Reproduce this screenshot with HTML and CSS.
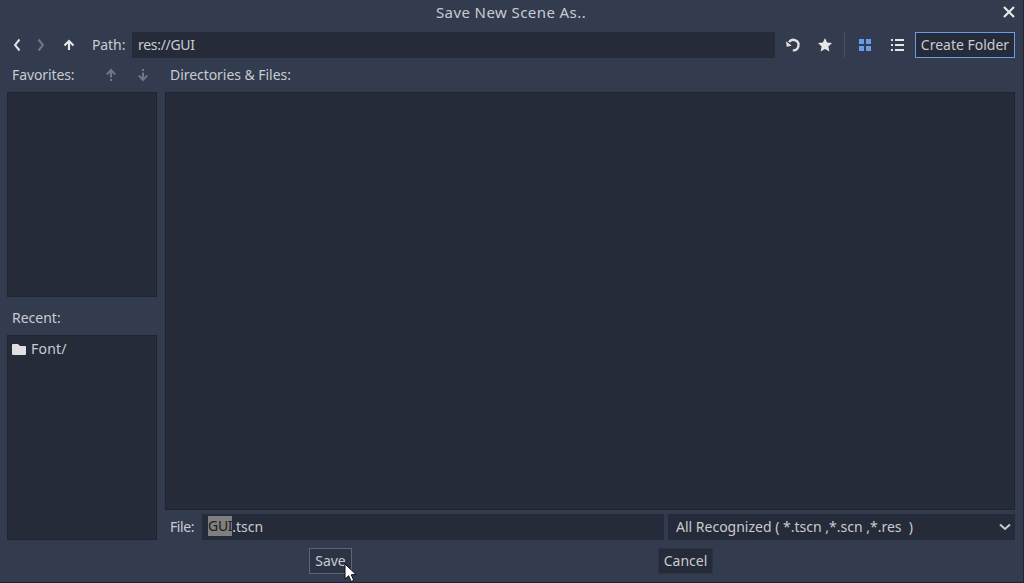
FILE: index.html
```html
<!DOCTYPE html>
<html lang="en">
<head>
<meta charset="utf-8">
<title>Save New Scene As..</title>
<link rel="stylesheet" href="styles.css">
</head>
<body>
<div class="dialog">
  <header class="titlebar">
    <span class="title">Save New Scene As..</span>
    <svg class="close" width="12" height="12" viewBox="0 0 12 12"><path d="M1 1L11 11M11 1L1 11" stroke="#e6e6e6" stroke-width="2.2" fill="none"/></svg>
  </header>
  <div class="toolbar">
    <button class="icon"><svg width="8" height="14" viewBox="0 0 8 14"><path d="M6.500 1.500L2 7L6.500 12.500" stroke="#e0e0e0" stroke-width="2" fill="none"/></svg></button>
    <button class="icon gap-s"><svg width="8" height="14" viewBox="0 0 8 14"><path d="M1.500 1.500L6 7L1.500 12.500" stroke="#6f7686" stroke-width="2" fill="none"/></svg></button>
    <button class="icon gap-m"><svg width="12" height="12" viewBox="0 0 12 12"><path d="M6 11V3M1.500 6.500L6 2L10.500 6.500" stroke="#e6e6e6" stroke-width="2.200" fill="none"/></svg></button>
    <span class="label path-label">Path:</span>
    <div class="field path-field">res://GUI</div>
    <button class="icon gap-reload"><svg width="16" height="16" viewBox="0 0 16 16"><path d="M4 5.200A5.200 5.200 0 1 1 7.800 13.300" stroke="#e0e0e0" stroke-width="2.400" fill="none"/><path d="M1 4.200L6.700 8.700L1.700 9.800Z" fill="#e0e0e0"/></svg></button>
    <button class="icon gap-l"><svg width="16" height="16" viewBox="0 0 16 16"><path d="M8 1L10.100 5.500L15 6.100L11.400 9.500L12.400 14.500L8 12L3.600 14.500L4.600 9.500L1 6.100L5.900 5.500Z" fill="#e6e6e6"/></svg></button>
    <span class="separator"></span>
    <button class="icon gap-sep"><svg width="12" height="12" viewBox="0 0 12 12"><path d="M0 0h5v5H0zM7 0h5v5H7zM0 7h5v5H0zM7 7h5v5H7z" fill="#699ce8"/></svg></button>
    <button class="icon gap-l"><svg width="13" height="12" viewBox="0 0 13 12"><path d="M0 0h2v2H0zM4 0h9v2H4zM0 5h2v2H0zM4 5h9v2H4zM0 10h2v2H0zM4 10h9v2H4z" fill="#e6e6e6"/></svg></button>
    <button class="btn create-folder">Create Folder</button>
  </div>
  <div class="columns">
    <aside class="sidebar">
      <div class="side-head">
        <span class="label fav-label">Favorites:</span>
        <button class="icon small"><svg width="12" height="14" viewBox="0 0 12 14"><path d="M6 13V11M6 9.500V3M1.800 6.500L6 2L10.200 6.500" stroke="#6f7686" stroke-width="2" fill="none"/></svg></button>
        <button class="icon small fav-down"><svg width="12" height="14" viewBox="0 0 12 14"><path d="M6 1V3M6 4.500V11M1.800 7.500L6 12L10.200 7.500" stroke="#6f7686" stroke-width="2" fill="none"/></svg></button>
      </div>
      <div class="panel fav-panel"></div>
      <div class="label recent-label">Recent:</div>
      <div class="panel recent-panel">
        <div class="recent-item">
          <svg width="14" height="12" viewBox="0 0 14 12"><path d="M0 2a1 1 0 0 1 1-1h5l2 2h5a1 1 0 0 1 1 1v7a1 1 0 0 1-1 1H1a1 1 0 0 1-1-1z" fill="#e0e0e0"/></svg>
          <span class="item-text">Font/</span>
        </div>
      </div>
    </aside>
    <main class="files">
      <div class="label files-label">Directories &amp; Files:</div>
      <div class="panel file-panel"></div>
      <div class="file-row">
        <span class="label file-label">File:</span>
        <div class="field file-field"><span class="selected">GUI</span>.tscn</div>
        <div class="field filter">
          <span>All Recognized ( *.tscn ,*.scn ,*.res &nbsp;)</span>
          <svg class="arrow" width="12" height="8" viewBox="0 0 12 8"><path d="M1 1.500L6 6L11 1.500" stroke="#c8ccd2" stroke-width="2" fill="none"/></svg>
        </div>
      </div>
    </main>
  </div>
  <div class="actions">
    <button class="btn save">Save</button>
    <button class="btn cancel">Cancel</button>
  </div>
</div>
<svg class="cursor" width="13" height="20" viewBox="0 0 13 20"><path d="M1 1V16L4.600 12.800L7.200 18.500L9.800 17.300L7.200 11.800L12 11.500Z" fill="#fff" stroke="#111" stroke-width="1"/></svg>
</body>
</html>
```
FILE: styles.css
```css
* { box-sizing: border-box; }
html, body { margin: 0; height: 583px; overflow: hidden; }
body {
  position: relative;
  background: #1f2430;
  font: 14px "Noto Sans", sans-serif;
  color: #c8ccd2;
}
button { font: inherit; color: inherit; padding: 0; margin: 0; }
.dialog {
  width: 1023px;
  height: 582px;
  background: #333b4f;
  padding: 0 8px 0 7px;
  display: flex;
  flex-direction: column;
}
.titlebar {
  height: 26px;
  display: flex;
  align-items: center;
  justify-content: center;
  position: relative;
  margin-bottom: 6px;
  padding-bottom: 3px;
}
.title { font-size: 15px; letter-spacing: 0.42px; color: #c8ccd2; }
.close { position: absolute; right: 0; top: 6px; }
.toolbar { height: 26px; display: flex; align-items: center; }
.icon {
  width: 20px;
  height: 26px;
  background: none;
  border: 0;
  display: flex;
  align-items: center;
  justify-content: center;
  flex: none;
}
.gap-s { margin-left: 4px; }
.gap-m { margin-left: 8px; }
.gap-reload { margin-left: 8px; }
.gap-l { margin-left: 12px; }
.gap-sep { margin-left: 10px; }
.separator { width: 1px; height: 26px; background: #464e61; margin-left: 9px; flex: none; }
.label { color: #c8ccd2; white-space: nowrap; }
.path-label { margin-left: 13px; width: 40px; padding-bottom: 2px; letter-spacing: -0.1px; }
.field {
  background: #252b39;
  height: 26px;
  display: flex;
  align-items: center;
  white-space: pre;
  padding-bottom: 2px;
}
.path-field { width: 643px; padding-left: 6px; flex: none; letter-spacing: -0.3px; }
.btn {
  height: 26px;
  background: #252b39;
  border: 1px solid #2c3342;
  display: flex;
  align-items: center;
  justify-content: center;
  flex: none;
  padding-bottom: 2px;
}
.create-folder { width: 100px; margin-left: 8px; border-color: #699ce8; }
.columns { flex: none; display: flex; gap: 8px; }
.sidebar { width: 150px; display: flex; flex-direction: column; }
.side-head { height: 34px; display: flex; align-items: center; }
.fav-label { margin-left: 5px; width: 89px; padding-bottom: 2px; letter-spacing: -0.1px; }
.small { width: 12px; height: 20px; margin-left: 4px; }
.fav-down { margin-left: 20px; }
.panel { background: #252b39; border: 1px solid #1f2430; }
.fav-panel { height: 205px; }
.recent-label { height: 38px; line-height: 42px; padding-left: 5px; }
.recent-panel { height: 205px; }
.recent-item { display: flex; align-items: center; gap: 5px; height: 26px; padding-left: 4px; }
.item-text { padding-bottom: 2px; letter-spacing: 0.2px; }
.files { flex: 1; min-width: 0; display: flex; flex-direction: column; }
.files-label { height: 34px; line-height: 34px; padding-left: 5px; letter-spacing: -0.05px; }
.file-panel { height: 418px; }
.file-row { height: 26px; margin-top: 4px; display: flex; align-items: center; }
.file-label { width: 37px; padding-left: 5px; padding-bottom: 2px; letter-spacing: -0.4px; }
.file-field { width: 462px; padding-left: 6px; }
.selected { background: #7f7f7f; color: #1d1d1d; line-height: 20px; letter-spacing: -0.3px; }
.filter { width: 347px; margin-left: 4px; padding: 0 4px 2px 8px; justify-content: space-between; }
.arrow { margin-top: 2px; }
.actions { margin-top: 8px; display: flex; justify-content: center; gap: 306px; }
.save { width: 43px; border-color: #5c6678; background: #2c3344; }
.cancel { width: 55px; }
.cursor { position: absolute; left: 344px; top: 563px; }
```
